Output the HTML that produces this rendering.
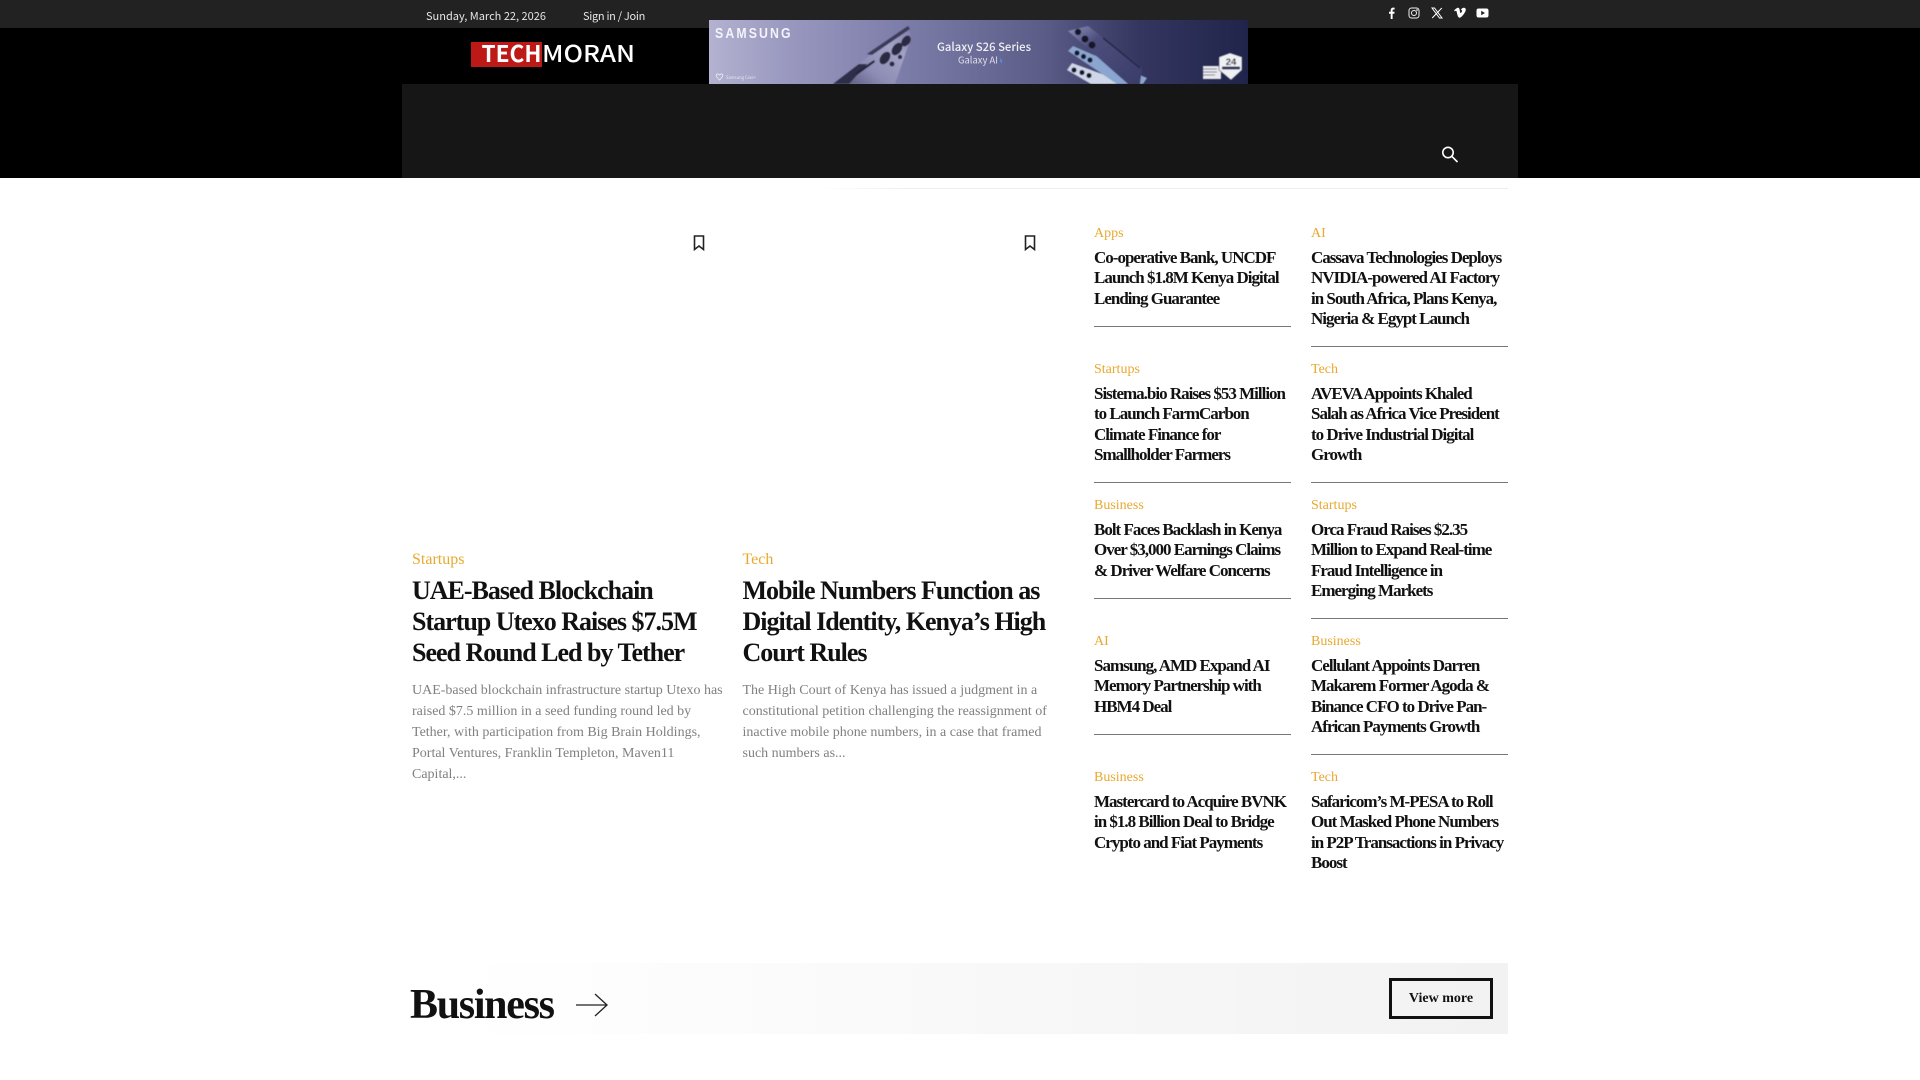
<!DOCTYPE html>
<html lang="en"><head><meta charset="utf-8"><title>TechMoran</title>
<style>
html,body{margin:0;padding:0;background:#fff;width:1920px;height:1080px;overflow:hidden}
body{position:relative;font-family:"Liberation Serif",serif}
.a{position:absolute;white-space:nowrap}
.bar{position:absolute;left:0;top:0;width:1920px;height:28px;background:#222}
.hd{position:absolute;left:0;top:28px;width:1920px;height:150px;background:#000}
.nav{position:absolute;left:402px;top:84px;width:1116px;height:94px;background:#161616}
.tb{font:11px/16px "Noto Sans CJK SC","DejaVu Sans",sans-serif;color:#e6e6e6;top:8px}
.c{color:#e9a82f;font-size:14px;line-height:16px}
.t{font-weight:700;font-size:17px;line-height:20.35px;letter-spacing:-1px;color:#111;width:215px}
.h{font-weight:700;font-size:26px;line-height:31.2px;letter-spacing:-1px;color:#111}
.e{font-size:14px;line-height:21px;color:#808080}
.r{position:absolute;width:197px;height:1px;background:#777}
svg{position:absolute;display:block}
</style></head><body>
<div class="bar"></div><div class="hd"></div><div class="nav"></div>
<div class="a tb" style="left:426px">Sunday, March 22, 2026</div>
<div class="a tb" style="left:583px;letter-spacing:-.3px">Sign in / Join</div>

<div style="position:absolute;left:470.500px;top:41.500px;width:71.500px;height:25.500px;background:#bd1a17"></div>
<svg style="left:470px;top:35px" width="180" height="40" viewBox="0 0 180 40">
<text x="11.500" y="27" font-family="Noto Sans CJK SC, DejaVu Sans, sans-serif" font-weight="700" font-size="23" textLength="60" lengthAdjust="spacingAndGlyphs" fill="#fff">TECH</text>
<text x="72" y="27" font-family="Noto Sans CJK SC, DejaVu Sans, sans-serif" font-weight="500" font-size="23" textLength="93" lengthAdjust="spacingAndGlyphs" fill="#fff">MORAN</text>
</svg>

<svg style="left:709px;top:20px" width="539" height="64" viewBox="0 0 539 64">
<defs>
<linearGradient id="b" x1="0" y1="0" x2="1" y2="0"><stop offset="0" stop-color="#b4b2d0"/><stop offset=".14" stop-color="#9a99c0"/><stop offset=".34" stop-color="#7f7fab"/><stop offset=".62" stop-color="#5b5c88"/><stop offset=".8" stop-color="#34365f"/><stop offset="1" stop-color="#20244a"/></linearGradient>
<linearGradient id="p" x1="0" y1="1" x2="1" y2="0"><stop offset="0" stop-color="#4d4d72"/><stop offset=".35" stop-color="#8c8cb4"/><stop offset=".7" stop-color="#a3a3c8"/><stop offset="1" stop-color="#7d7da8"/></linearGradient>
<linearGradient id="q" x1="0" y1="0" x2="1" y2="1"><stop offset="0" stop-color="#8f93bd"/><stop offset=".3" stop-color="#4d4e7c"/><stop offset="1" stop-color="#3a3c68"/></linearGradient>
<filter id="s" x="-5%" y="-5%" width="110%" height="110%"><feGaussianBlur stdDeviation=".5"/></filter>
</defs>
<rect width="539" height="64" fill="url(#b)"/>
<g filter="url(#s)">
<path d="M124 64 199 6 202 18 186 64Z" fill="url(#p)"/>
<path d="M124 64 150 44 158 44 140 64Z" fill="#2d2d48"/>
<path d="M146 53 165 40 166 42 148 55Z" fill="#26263e"/>
<path d="M158 34 199 6 201 9 163 35Z" fill="#3a3a58"/>
<ellipse cx="176" cy="38" rx="4.500" ry="7" transform="rotate(35 176 38)" fill="#2a2a42"/>
<ellipse cx="188" cy="29" rx="4.500" ry="7" transform="rotate(35 188 29)" fill="#2a2a42"/>
<ellipse cx="197" cy="21" rx="4" ry="6" transform="rotate(35 197 21)" fill="#2a2a42"/>
<circle cx="183" cy="44" r="2.500" fill="#2a2a42"/><circle cx="191" cy="37" r="2.200" fill="#2a2a42"/>

<path d="M358 50 363 43 415 62 415 64 382 64Z" fill="#cfd6e8"/>
<path d="M359 31 364 26 438 58 434 64 408 64Z" fill="#8aa5cf"/>
<path d="M359 11 379 6 433 48 431 64 419 64Z" fill="url(#q)"/>
<circle cx="369" cy="12" r="3.200" fill="#17182a"/><circle cx="376" cy="19" r="3.500" fill="#17182a"/><circle cx="383" cy="25" r="3.500" fill="#17182a"/>
<circle cx="368" cy="33" r="2.600" fill="#17182a"/><circle cx="374.500" cy="36.500" r="2.600" fill="#17182a"/><circle cx="381" cy="40" r="2.600" fill="#17182a"/>
<circle cx="365" cy="50" r="2.600" fill="#17182a"/><circle cx="373" cy="52.500" r="2.600" fill="#17182a"/><circle cx="380" cy="55.500" r="2.600" fill="#17182a"/>
<path d="M394 18 431 48" stroke="#1f2040" stroke-width="1.300"/>

<rect x="494" y="46" width="18" height="13" fill="#e9e9ee"/>
<path d="M494 49h14M494 52h14M494 55h12" stroke="#55566e" stroke-width=".8"/>
<path d="M510 37 521 33 533 37 533 50 522 60 510 50Z" fill="#eef0f4" stroke="#2b2d50" stroke-width=".6"/>
<rect x="513" y="46.500" width="18" height="3" fill="#33355a"/>
<text x="522" y="45" text-anchor="middle" font-family="Liberation Sans, sans-serif" font-weight="700" font-size="9.500" fill="#1a1a2c">24</text>
</g>
<text transform="translate(6 18) scale(.82 1)" font-family="Liberation Sans, sans-serif" font-weight="700" font-size="15" letter-spacing="2.600" fill="#f3f3f8">SAMSUNG</text>
<text x="228" y="31" font-family="Noto Sans CJK SC, Liberation Sans, sans-serif" font-weight="500" font-size="11.500" textLength="94" lengthAdjust="spacingAndGlyphs" fill="#f0f0f4">Galaxy S26 Series</text>
<text x="249" y="43.500" font-family="Noto Sans CJK SC, Liberation Sans, sans-serif" font-size="9.500" textLength="40" lengthAdjust="spacingAndGlyphs" fill="#dfdfec">Galaxy AI</text>
<path d="M291 37l1 3 1.500-1-1 5-1.500-3Z" fill="#4f8fd8"/>
<text x="17" y="59" font-family="Noto Sans CJK SC, sans-serif" font-size="4.500" textLength="30" lengthAdjust="spacingAndGlyphs" fill="#e6e6f0">Samsung Care+</text>
<path d="M10.500 60 7.500 56.500C6.500 54.500 8.500 53 10.500 55 12.500 53 14.500 54.500 13.500 56.500Z" fill="none" stroke="#e6e6f0" stroke-width=".9"/>
</svg>

<svg style="left:1385px;top:7px" width="12" height="12" viewBox="0 0 12 12"><path d="M7.600 12V6.700h1.700l.3-2H7.600V3.500c0-.6.200-1 1-1h1V.7C9.400.6 8.900.6 8.300.6 6.800.6 5.700 1.500 5.700 3.300v1.400H4v2h1.700V12Z" fill="#fff"/></svg>
<svg style="left:1408px;top:7px" width="12" height="12" viewBox="0 0 12 12" fill="none" stroke="#f2f2f2" stroke-width="1"><rect x="1" y="1" width="10" height="10" rx="2.500"/><circle cx="6" cy="6" r="2.500"/><circle cx="9" cy="3" r=".4"/></svg>
<svg style="left:1431px;top:7px" width="12" height="12" viewBox="0 0 12 12" fill="none" stroke="#fff" stroke-width="1"><path d="M1 1h2.500l7.500 10H8.500ZM10.800 1 1.200 11"/></svg>
<svg style="left:1454px;top:7px" width="12" height="12" viewBox="0 0 12 12"><path d="M.2 3.200C1.500 2.100 2.800.8 3.800.7c1.200-.1 1.600.8 1.800 1.900.3 1.500.5 3.400 1.100 3.400.5 0 1.400-1.500 1.400-2.100 0-.7-.5-.9-1.300-.6C7.300 1.600 8.500.7 9.900.7c1.300 0 2 .9 1.900 2.200-.2 2.200-3.700 7.200-5.900 7.800C4.300 11 3.700 9 3.300 7.400 2.900 5.900 2.600 3.700 2 3.700c-.4 0-1 .5-1.300.7Z" fill="#fff"/></svg>
<svg style="left:1476px;top:7px" width="13" height="12" viewBox="0 0 13 12"><path d="M2.500 1.500h8c1.200 0 2 .8 2 2v5c0 1.200-.8 2-2 2h-8c-1.200 0-2-.8-2-2v-5c0-1.200.8-2 2-2ZM5.200 3.700v4.600L9 6Z" fill="#fff" fill-rule="evenodd"/></svg>

<svg style="left:1441px;top:145px" width="18" height="18" viewBox="0 0 18 18" fill="none" stroke="#fff" stroke-width="1.600"><circle cx="7" cy="7.500" r="5.200"/><path d="M10.800 11.300 16.500 17"/></svg>

<div style="position:absolute;left:820px;top:188px;width:688px;height:1px;background:linear-gradient(90deg,#fff,#eee 12%)"></div>

<svg style="left:693px;top:235px" width="12" height="16" viewBox="0 0 12 16" fill="none" stroke="#222" stroke-width="1.600"><path d="M1.500 1h9v13.500L6 11l-4.500 3.500Z"/></svg>
<svg style="left:1024px;top:235px" width="12" height="16" viewBox="0 0 12 16" fill="none" stroke="#222" stroke-width="1.600"><path d="M1.500 1h9v13.500L6 11l-4.500 3.500Z"/></svg>

<div class="a" style="left:412px;top:550px;color:#e9a82f;font-size:16px;line-height:19px">Startups</div>
<div class="a h" style="left:412px;top:575px">UAE-Based Blockchain<br>Startup Utexo Raises $7.5M<br>Seed Round Led by Tether</div>
<div class="a e" style="left:412px;top:680px">UAE-based blockchain infrastructure startup Utexo has<br>raised $7.5 million in a seed funding round led by<br>Tether, with participation from Big Brain Holdings,<br>Portal Ventures, Franklin Templeton, Maven11<br>Capital,...</div>

<div class="a" style="left:742.500px;top:550px;color:#e9a82f;font-size:16px;line-height:19px">Tech</div>
<div class="a h" style="left:742.500px;top:575px">Mobile Numbers Function as<br>Digital Identity, Kenya’s High<br>Court Rules</div>
<div class="a e" style="left:742.500px;top:680px">The High Court of Kenya has issued a judgment in a<br>constitutional petition challenging the reassignment of<br>inactive mobile phone numbers, in a case that framed<br>such numbers as...</div>

<div class="a c" style="left:1094px;top:226px">Apps</div>
<div class="a t" style="left:1094px;top:248px">Co-operative Bank, UNCDF<br>Launch $1.8M Kenya Digital<br>Lending Guarantee</div>
<div class="r" style="left:1094px;top:326px"></div>
<div class="a c" style="left:1094px;top:362px">Startups</div>
<div class="a t" style="left:1094px;top:384px">Sistema.bio Raises $53 Million<br>to Launch FarmCarbon<br>Climate Finance for<br>Smallholder Farmers</div>
<div class="r" style="left:1094px;top:482px"></div>
<div class="a c" style="left:1094px;top:498px">Business</div>
<div class="a t" style="left:1094px;top:520px">Bolt Faces Backlash in Kenya<br>Over $3,000 Earnings Claims<br>&amp; Driver Welfare Concerns</div>
<div class="r" style="left:1094px;top:598px"></div>
<div class="a c" style="left:1094px;top:634px">AI</div>
<div class="a t" style="left:1094px;top:656px">Samsung, AMD Expand AI<br>Memory Partnership with<br>HBM4 Deal</div>
<div class="r" style="left:1094px;top:734px"></div>
<div class="a c" style="left:1094px;top:770px">Business</div>
<div class="a t" style="left:1094px;top:792px">Mastercard to Acquire BVNK<br>in $1.8 Billion Deal to Bridge<br>Crypto and Fiat Payments</div>

<div class="a c" style="left:1311px;top:226px">AI</div>
<div class="a t" style="left:1311px;top:248px">Cassava Technologies Deploys<br>NVIDIA-powered AI Factory<br>in South Africa, Plans Kenya,<br>Nigeria &amp; Egypt Launch</div>
<div class="r" style="left:1311px;top:346px"></div>
<div class="a c" style="left:1311px;top:362px">Tech</div>
<div class="a t" style="left:1311px;top:384px">AVEVA Appoints Khaled<br>Salah as Africa Vice President<br>to Drive Industrial Digital<br>Growth</div>
<div class="r" style="left:1311px;top:482px"></div>
<div class="a c" style="left:1311px;top:498px">Startups</div>
<div class="a t" style="left:1311px;top:520px">Orca Fraud Raises $2.35<br>Million to Expand Real-time<br>Fraud Intelligence in<br>Emerging Markets</div>
<div class="r" style="left:1311px;top:618px"></div>
<div class="a c" style="left:1311px;top:634px">Business</div>
<div class="a t" style="left:1311px;top:656px">Cellulant Appoints Darren<br>Makarem Former Agoda &amp;<br>Binance CFO to Drive Pan-<br>African Payments Growth</div>
<div class="r" style="left:1311px;top:754px"></div>
<div class="a c" style="left:1311px;top:770px">Tech</div>
<div class="a t" style="left:1311px;top:792px">Safaricom’s M-PESA to Roll<br>Out Masked Phone Numbers<br>in P2P Transactions in Privacy<br>Boost</div>

<div style="position:absolute;left:402px;top:963px;width:1106px;height:71px;background:linear-gradient(90deg,#fff 5%,#f2f2f2)"></div>
<div class="a" style="left:410px;top:981px;font-size:42px;line-height:48px;font-weight:700;letter-spacing:-1.300px;color:#111">Business</div>
<svg style="left:574px;top:990px" width="36" height="30" viewBox="0 0 36 30" fill="none" stroke="#222" stroke-width="1.300"><path d="M2 15H33M21 4 33 15 21 26"/></svg>
<div style="position:absolute;left:1389px;top:978px;width:98px;height:35px;border:3px solid #111;font:700 14px/36px 'Liberation Serif',serif;text-align:center;color:#111">View more</div>
</body></html>
